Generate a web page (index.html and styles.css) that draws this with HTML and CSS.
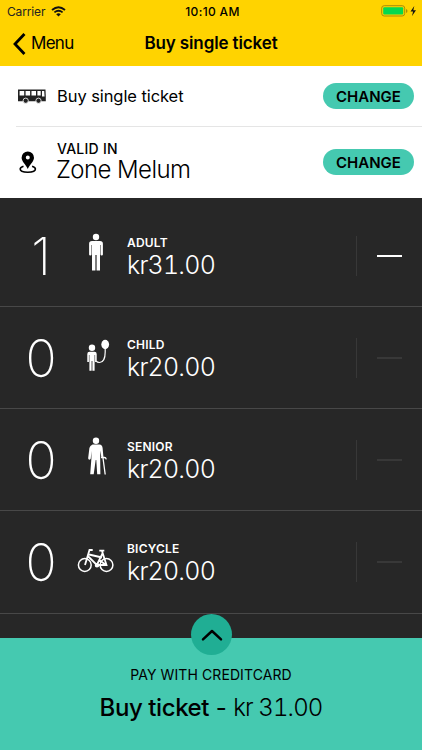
FILE: index.html
```
<!DOCTYPE html>
<html lang="en">
<head>
<meta charset="utf-8">
<title>Buy single ticket</title>
<link rel="stylesheet" href="styles.css">
</head>
<body>
<div class="app">
  <header class="header">
    <div class="status">
      <div class="carrier"><span>Carrier</span>
        <svg width="15" height="11" viewBox="0 0 15 11" fill="none" stroke="#111" stroke-width="1.8"><path d="M1 4Q7.500 -1.600 14 4M3.400 6.400Q7.500 3 11.600 6.400"/><path d="M5.200 8.200Q7.500 6.400 9.800 8.200L7.500 10.500Z" fill="#111" stroke="none"/></svg>
      </div>
      <div class="clock">10:10 AM</div>
      <svg class="battery" width="36" height="12" viewBox="0 0 36 12"><rect x=".7" y=".7" width="23" height="10.300" rx="2.500" fill="none" stroke="#a98d08" stroke-width="1"/><rect x="2.200" y="2.200" width="20" height="7.300" rx="1" fill="#04d94f"/><path d="M25 4v4q1.500-.5 1.500-2t-1.500-2" fill="#a98d08"/><path d="M33.300 1 29.500 6.500h2.600L31 11l4-5.700h-2.700z" fill="#111"/></svg>
    </div>
    <div class="nav">
      <div class="back"><svg width="14" height="22" viewBox="0 0 14 22"><path d="M11.500 2 3 11l8.500 9" fill="none" stroke="#000" stroke-width="2.800" stroke-linecap="square"/></svg><span>Menu</span></div>
      <h1>Buy single ticket</h1>
    </div>
  </header>

  <section class="options">
    <div class="option">
      <svg class="bus" width="28" height="15" viewBox="0 0 28 15"><path d="M0 .5h27.500l.3 7v4.700H0z" fill="#222"/><path d="M1.600 2h4.600v4.500H1.600zM7.600 2h4.500v4.500H7.600zM13.500 2H18v4.500h-4.500zM19.400 2h3.300v4.500h-3.300zM24 2h2.200l.4 5.500H24z" fill="#fff"/><g fill="#222" stroke="#fff" stroke-width=".8"><circle cx="7.700" cy="11.700" r="2.600"/><circle cx="20.500" cy="11.700" r="2.600"/></g></svg>
      <span class="product">Buy single ticket</span>
      <button class="change">CHANGE</button>
    </div>
    <div class="option zone">
      <svg class="pin" width="18" height="23" viewBox="0 0 18 23"><path d="M4.500 15.300C2.500 16 1.200 17 1.200 18.100c0 2 3.500 3.200 7.600 3.200s7.600-1.200 7.600-3.200c0-1.100-1.300-2.100-3.300-2.800" fill="none" stroke="#000" stroke-width="1.600"/><path fill-rule="evenodd" d="M8.800.5a6.200 6.200 0 0 0-6.200 6.200c0 3.700 4 6.300 6.200 11.300 2.200-5 6.200-7.600 6.200-11.300A6.200 6.200 0 0 0 8.800.5m0 4.100a2 2 0 1 1 0 4 2 2 0 0 1 0-4"/></svg>
      <div class="zone-text"><span class="caption">VALID IN</span><span class="zone-name">Zone Melum</span></div>
      <button class="change">CHANGE</button>
    </div>
  </section>

  <main class="fares">
    <div class="fare">
      <span class="count">1</span>
      <svg class="icon" width="38" height="40" viewBox="0 0 38 40" fill="#fff"><circle cx="19" cy="4" r="3.200"/><path d="M15 8h8q2.900 0 2.900 2.700V21.500q0 1-1.200 1t-1.200-1V12h-.5v25.500h-3.400V22h-1.200v15.500h-3.400V12h-.5v9.500q0 1-1.200 1t-1.200-1V10.700Q12.100 8 15 8z"/></svg>
      <div class="detail"><span class="type">ADULT</span><span class="price">kr31.00</span></div>
      <button class="minus active" aria-label="Remove"><i></i></button>
    </div>
    <div class="fare">
      <span class="count">0</span>
      <svg class="icon" width="38" height="40" viewBox="0 0 38 40" fill="#fff"><circle cx="15" cy="12.800" r="3.200"/><path d="M12.500 16.700h5q2.200 0 2.200 2.200v8h-1.600v-7h-.5v15.800h-2.200V26h-.8v9.700h-2.200V19.900h-.5v7h-1.600v-8q0-2.200 2.200-2.200z"/><ellipse cx="28.200" cy="9.500" rx="3.900" ry="4.700"/><path d="M28.200 13.500v3.500c0 7-2.200 10.500-5.700 10.500-1.500 0-2.500-.3-3.300-1.300" fill="none" stroke="#fff" stroke-width="1.200"/></svg>
      <div class="detail"><span class="type">CHILD</span><span class="price">kr20.00</span></div>
      <button class="minus" aria-label="Remove"><i></i></button>
    </div>
    <div class="fare">
      <span class="count">0</span>
      <svg class="icon" width="38" height="40" viewBox="0 0 38 40" fill="#fff"><circle cx="19" cy="3.700" r="3.200"/><path d="M15.500 7.500h7q2.700.4 3.100 3.500l.9 9.500-2 .6-1.300-7.500v8l.2 15.700h-3.200L19.300 23h-.6l-2 14.300h-3.500l1.200-16V14l-.6 7.500q-.3 1.500-2 1-.8-.4-.6-1.700l1.200-9.800q.5-2.500 3.100-3.500z"/><path d="M24 20.500h3.400q1.400 0 1.900 1.800M26 21l2.200 16.500" fill="none" stroke="#fff" stroke-width="1.300"/></svg>
      <div class="detail"><span class="type">SENIOR</span><span class="price">kr20.00</span></div>
      <button class="minus" aria-label="Remove"><i></i></button>
    </div>
    <div class="fare">
      <span class="count">0</span>
      <svg class="icon" width="38" height="40" viewBox="0 0 38 40" fill="none" stroke="#fff" stroke-width="1.500"><circle cx="7.800" cy="26" r="6.400"/><circle cx="29.500" cy="26" r="6.400"/><path d="M8 26 12.500 11h3.200M12 15.500l13 3M11.300 17.500l8.500 8.500 5.700-11.500M22.300 11.700h5M25 12l4.500 14h-9.500M22.200 21l6.800 5" stroke-width="1.800"/><circle cx="20" cy="26.300" r="1.500" fill="#fff"/></svg>
      <div class="detail"><span class="type">BICYCLE</span><span class="price">kr20.00</span></div>
      <button class="minus" aria-label="Remove"><i></i></button>
    </div>
  </main>

  <footer class="pay">
    <button class="expand" aria-label="Expand"><svg width="22" height="14" viewBox="0 0 22 14"><path d="M2 11.300 11 3l9 8.300" fill="none" stroke="#000" stroke-width="2.500" stroke-linecap="round" stroke-linejoin="round"/></svg></button>
    <div class="method">PAY WITH CREDITCARD</div>
    <div class="buy"><span class="buy-label">Buy ticket</span><span class="dash"> - </span><span class="total">kr 31.00</span></div>
  </footer>
</div>
</body>
</html>
```
FILE: styles.css
```
* { box-sizing: border-box; }
body { margin: 0; font-family: Inter, "Liberation Sans", sans-serif; color: #000; }
button { font: inherit; border: 0; padding: 0; margin: 0; color: inherit; background: none; }
svg { display: block; flex: none; }
span, h1, .clock { white-space: nowrap; }

.app { width: 422px; height: 750px; display: flex; flex-direction: column; overflow: hidden; background: #272727; }

.header { height: 66px; background: #ffd300; flex: none; }
.status { height: 22px; display: grid; grid-template-columns: 1fr auto 1fr; align-items: center; padding: 0 5px 0 7px; }
.carrier { display: flex; align-items: center; gap: 6px; font-size: 12px; letter-spacing: -.15px; color: #222; }
.clock { font-size: 12px; font-weight: 500; letter-spacing: .35px; padding-left: 1px; }
.battery { justify-self: end; }
.nav { height: 43px; display: grid; grid-template-columns: 1fr auto 1fr; align-items: center; padding: 0 12px; }
.back { display: flex; align-items: center; gap: 5px; font-size: 17px; letter-spacing: -.7px; }
.back span { margin-top: -2px; }
.nav h1 { margin: -1px 0 0; font-size: 17px; font-weight: 600; letter-spacing: -.12px; }

.options { height: 131.500px; flex: none; background: #fff; }
.option { height: 61px; margin-left: 16px; padding: 0 8px 0 2px; display: flex; align-items: center; border-bottom: 1px solid #e5e5e5; }
.bus { margin: 1px 11px 0 0; }
.product { font-size: 16.500px; letter-spacing: -.08px; }
.zone { height: 70.500px; border: 0; }
.pin { margin: 1px 20px 0 1px; }
.zone-text { display: flex; flex-direction: column; margin-top: -2px; }
.caption { font-size: 14px; line-height: 17px; font-weight: 500; letter-spacing: .25px; }
.zone-name { font-size: 24px; line-height: 25px; font-weight: 300; letter-spacing: -.58px; margin-left: -1px; }
.change { margin-left: auto; width: 91px; height: 26px; border-radius: 13px; background: #45c9b0; font-size: 15px; font-weight: 600; text-align: center; }

.fares { flex: 1; color: #fff; padding-top: 7px; min-height: 0; }
.fare { height: 102.250px; display: flex; align-items: center; padding-top: 1px; border-bottom: 1px solid #484848; }
.count { width: 82px; text-align: center; font-size: 51.500px; font-weight: 200; line-height: 60px; }
.icon { margin: -6px 12px 0 -5px; }
.detail { display: flex; flex-direction: column; padding-top: 4px; }
.type { font-size: 12px; line-height: 15px; font-weight: 600; letter-spacing: .2px; }
.price { font-size: 25px; line-height: 31px; font-weight: 300; font-variant-numeric: tabular-nums; letter-spacing: -.8px; }
.minus { margin-left: auto; width: 66px; height: 40px; border-left: 1px solid #383838; display: flex; align-items: center; padding-left: 20px; }
.minus i { width: 25px; height: 2px; background: #383838; }
.minus.active i { background: #fff; }

.pay { position: relative; height: 112px; flex: none; background: #45c9b0; text-align: center; padding-top: 27px; }
.expand { position: absolute; left: 191px; top: -24px; width: 41px; height: 41px; border-radius: 50%; background: #20ae94; display: grid; place-items: center; }
.method { font-size: 14px; line-height: 20px; letter-spacing: .1px; }
.buy { font-size: 24px; line-height: 32px; margin-top: 7px; }
.buy span { white-space: pre; }
.buy-label { font-weight: 500; letter-spacing: -.42px; }
.dash { font-weight: 400; letter-spacing: -.1px; }
.total { font-weight: 300; font-variant-numeric: tabular-nums; letter-spacing: -.9px; }
```
